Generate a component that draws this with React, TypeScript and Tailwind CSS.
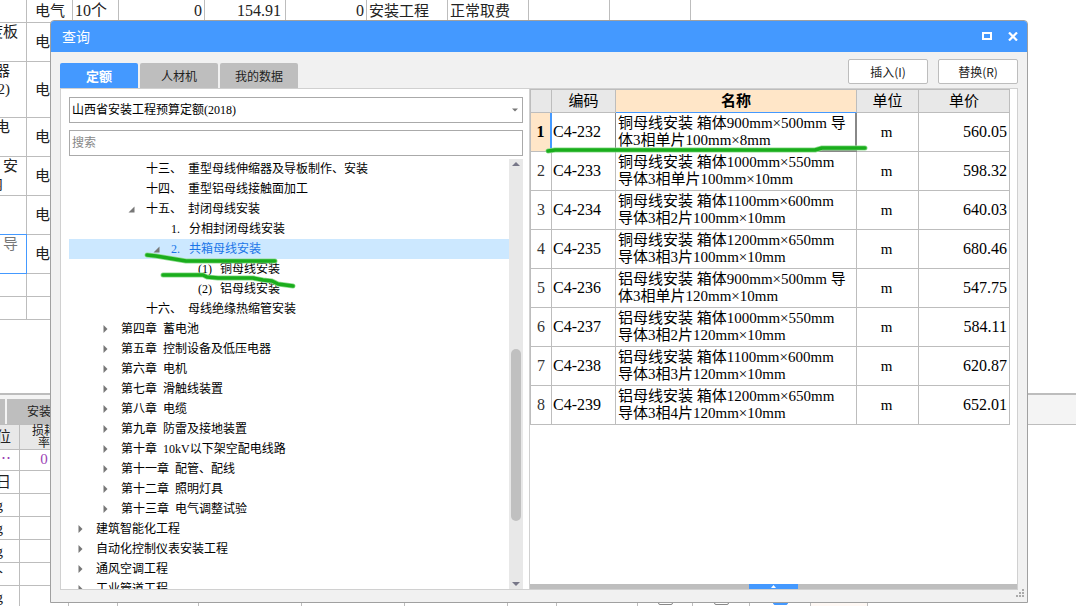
import React, { useState } from "react";

const fontCell = "font-['Liberation_Serif','Noto_Sans_CJK_SC',serif]";
const fontTree = "font-['Liberation_Serif','Noto_Sans_CJK_SC',sans-serif]";
const fontUi = "font-['Noto_Sans_CJK_SC',sans-serif]";

type TreeItem = {
  level: number;
  parts: string[];
  state?: "open" | "closed";
};

const tree: TreeItem[] = [
  { level: 2, parts: ["十三、", "重型母线伸缩器及导板制作、安装"] },
  { level: 2, parts: ["十四、", "重型铝母线接触面加工"] },
  { level: 2, parts: ["十五、", "封闭母线安装"], state: "open" },
  { level: 3, parts: ["1.", "分相封闭母线安装"] },
  { level: 3, parts: ["2.", "共箱母线安装"], state: "open" },
  { level: 4, parts: ["(1)", "铜母线安装"] },
  { level: 4, parts: ["(2)", "铝母线安装"] },
  { level: 2, parts: ["十六、", "母线绝缘热缩管安装"] },
  { level: 1, parts: ["第四章", "蓄电池"], state: "closed" },
  { level: 1, parts: ["第五章", "控制设备及低压电器"], state: "closed" },
  { level: 1, parts: ["第六章", "电机"], state: "closed" },
  { level: 1, parts: ["第七章", "滑触线装置"], state: "closed" },
  { level: 1, parts: ["第八章", "电缆"], state: "closed" },
  { level: 1, parts: ["第九章", "防雷及接地装置"], state: "closed" },
  { level: 1, parts: ["第十章", "10kV以下架空配电线路"], state: "closed" },
  { level: 1, parts: ["第十一章", "配管、配线"], state: "closed" },
  { level: 1, parts: ["第十二章", "照明灯具"], state: "closed" },
  { level: 1, parts: ["第十三章", "电气调整试验"], state: "closed" },
  { level: 0, parts: ["建筑智能化工程"], state: "closed" },
  { level: 0, parts: ["自动化控制仪表安装工程"], state: "closed" },
  { level: 0, parts: ["通风空调工程"], state: "closed" },
  { level: 0, parts: ["工业管道工程"], state: "closed" },
];

const indents = ["pl-[9px]", "pl-[34px]", "pl-[59px]", "pl-[84px]", "pl-[109px]"];

const quotas = [
  { code: "C4-232", name: ["铜母线安装 箱体900mm×500mm 导", "体3相单片100mm×8mm"], price: "560.05" },
  { code: "C4-233", name: ["铜母线安装 箱体1000mm×550mm", "导体3相单片100mm×10mm"], price: "598.32" },
  { code: "C4-234", name: ["铜母线安装 箱体1100mm×600mm", "导体3相2片100mm×10mm"], price: "640.03" },
  { code: "C4-235", name: ["铜母线安装 箱体1200mm×650mm", "导体3相3片100mm×10mm"], price: "680.46" },
  { code: "C4-236", name: ["铝母线安装 箱体900mm×500mm 导", "体3相单片120mm×10mm"], price: "547.75" },
  { code: "C4-237", name: ["铝母线安装 箱体1000mm×550mm", "导体3相2片120mm×10mm"], price: "584.11" },
  { code: "C4-238", name: ["铝母线安装 箱体1100mm×600mm", "导体3相3片120mm×10mm"], price: "620.87" },
  { code: "C4-239", name: ["铝母线安装 箱体1200mm×650mm", "导体3相4片120mm×10mm"], price: "652.01" },
];

export default function App() {
  return (
    <div className={`relative h-screen w-full overflow-hidden bg-white text-[15px] leading-[18px] text-[#222] ${fontCell}`}>
      <div className="flex h-full flex-col">
        <BudgetSheet />
        <DetailSheet />
      </div>
      <QueryDialog />
      <MarkerStrokes />
    </div>
  );
}

// Sheet behind the dialog

function BudgetSheet() {
  const rows = [
    { h: "h-[39px]", lines: ["度板"], pad: "pr-2", type: "电" },
    { h: "h-14", lines: ["器", "2)"], pad: "pr-4", type: "电" },
    { h: "h-[39px]", lines: ["电"], pad: "pr-4", type: "电" },
    { h: "h-[39px]", lines: ["安", "内\u3000"], pad: "pr-2", type: "电" },
    { h: "h-[39px]", lines: [], pad: "pr-2", type: "电" },
    { h: "h-[39px]", lines: ["导"], pad: "pr-2", type: "电", active: true },
    { h: "h-[23px]", lines: [], pad: "pr-2", type: "" },
    { h: "h-[23px]", lines: [], pad: "pr-2", type: "" },
  ];
  const cell = "border-r border-b border-[#bdbdbd]";
  return (
    <div className="h-[393px] shrink-0">
      <div className="grid h-[23px] w-[691px] grid-cols-[27px_46px_46px_86px_81px_81px_81px_81px_81px_81px] whitespace-nowrap leading-[22px]">
        <div className={cell} />
        <div className={`${cell} pl-2`}>电气</div>
        <div className={`${cell} pl-0.5 text-base leading-[22px]`}>10个</div>
        <div className={`${cell} pr-0.5 text-right text-base leading-[22px]`}>0</div>
        <div className={`${cell} pr-1 text-right text-base leading-[22px]`}>154.91</div>
        <div className={`${cell} pr-0.5 text-right text-base leading-[22px]`}>0</div>
        <div className={`${cell} pl-0.5`}>安装工程</div>
        <div className={`${cell} pl-0.5`}>正常取费</div>
        <div className={cell} />
        <div className={cell} />
      </div>
      {rows.map((row, i) => (
        <div key={i} className={`grid grid-cols-[27px_46px] ${row.h}`}>
          <div
            className={`flex flex-col items-end overflow-hidden whitespace-pre border-r border-b ${row.pad} ${
              row.active ? "border-[#4499ff] text-[#777] shadow-[0_-1px_0_#4499ff]" : "border-[#bdbdbd]"
            }`}
          >
            {row.lines.map((line) => (
              <span key={line}>{line}</span>
            ))}
          </div>
          <div className={`flex items-center pl-2 ${cell}`}>{row.type}</div>
        </div>
      ))}
    </div>
  );
}

function DetailSheet() {
  const units = ["⋯", "日", "kg", "kg", "kg", "个", "kg"];
  const grid =
    "grid h-[23px] w-[868px] shrink-0 grid-cols-[20px_49px_49px_81px_103px_103px_103px_49px_81px_55px_57px_61px_57px]";
  return (
    <div className="flex flex-1 flex-col overflow-hidden border-t-2 border-[#bdbdbd]">
      <div className="flex h-[30px] shrink-0 items-end gap-0.5 border-b border-[#bdbdbd] bg-[#f4f4f4] text-xs">
        <button className="h-[25px] w-[5px] bg-[#bebebe]" aria-label="工料机显示" />
        <button className="h-[25px] w-20 bg-[#bebebe] pl-5 text-left">安装费用</button>
      </div>
      <div className={grid}>
        <div className="flex items-center justify-end border-r border-b border-[#bdbdbd] bg-[#e8e8e8] pr-2">位</div>
        <div className="flex flex-col items-center justify-center border-r border-b border-[#bdbdbd] bg-[#e8e8e8] text-xs leading-3">
          <span>损耗</span>
          <span>率</span>
        </div>
      </div>
      {units.map((unit, r) => (
        <div key={r} className={grid}>
          {Array.from({ length: 13 }, (_, c) => (
            <div
              key={c}
              className={`flex items-center overflow-hidden border-r border-b border-[#bdbdbd] ${
                r === 0 ? "text-[#9b3fb5]" : ""
              } ${c === 0 ? (r < 2 ? "justify-end pr-2" : "justify-end pr-4") : "justify-center"} ${
                c === 12 ? "bg-[#fff9f5]" : ""
              }`}
            >
              {c === 0 && unit}
              {c === 1 && r === 0 && "0"}
              {c >= 9 && c <= 11 && (
                <input
                  type="checkbox"
                  aria-label={`选项${r + 1}-${c}`}
                  defaultChecked={c === 11}
                  className="size-[15px] appearance-none rounded-xs border border-[#888] bg-white checked:border-[#4499ff] checked:bg-[#4499ff]"
                />
              )}
            </div>
          ))}
        </div>
      ))}
    </div>
  );
}

// Dialog

function QueryDialog() {
  return (
    <div
      role="dialog"
      aria-label="查询"
      className="absolute top-5 right-12 bottom-[3px] left-[50px] flex flex-col overflow-hidden rounded-t border border-[#a0a0a0] bg-[#f1f1f1]"
    >
      <header className={`flex h-[31px] shrink-0 items-center justify-between bg-[#4499ff] pr-[9px] pb-px pl-[11px] text-white ${fontUi}`}>
        <h1 className="text-sm">查询</h1>
        <div className="flex items-center gap-4">
          <button aria-label="最大化">
            <svg width="10" height="8" viewBox="0 0 10 8">
              <rect x="1" y="1" width="8" height="6" fill="none" stroke="#fff" strokeWidth="2" />
            </svg>
          </button>
          <button aria-label="关闭">
            <svg width="10" height="9" viewBox="0 0 10 9">
              <path d="M1 0.5L9 8.5M9 0.5L1 8.5" stroke="#fff" strokeWidth="2.2" />
            </svg>
          </button>
        </div>
      </header>

      <div className={`flex h-9 shrink-0 justify-between px-[9px] text-xs ${fontUi}`}>
        <div role="tablist" className="flex items-end gap-0.5">
          <button role="tab" aria-selected="true" className="h-[25px] w-[78px] rounded-t-xs bg-[#4499ff] text-[13px] font-bold text-white">
            定额
          </button>
          <button role="tab" className="h-[25px] w-[78px] rounded-t-xs bg-[#bebebe]">人材机</button>
          <button role="tab" className="h-[25px] w-[78px] rounded-t-xs bg-[#bebebe]">我的数据</button>
        </div>
        <div className="flex gap-2.5 pt-[7px]">
          <button className="h-[25px] w-20 rounded-xs border border-[#bdbdbd] bg-white">插入(I)</button>
          <button className="h-[25px] w-20 rounded-xs border border-[#bdbdbd] bg-white">替换(R)</button>
        </div>
      </div>

      <div className="mx-[9px] mb-3 flex min-h-0 flex-1 border border-[#d0d0d0] bg-white">
        <CatalogPane />
        <QuotaPane />
      </div>

      {/* Resize grip */}
      <svg className="absolute right-0.5 bottom-1 text-[#aaa]" width="9" height="9" viewBox="0 0 9 9" fill="currentColor">
        <path d="M6 0h2v2h-2zM3 3h2v2h-2zM6 3h2v2h-2zM0 6h2v2h-2zM3 6h2v2h-2zM6 6h2v2h-2z" />
      </svg>
    </div>
  );
}

function CatalogPane() {
  const [selected, setSelected] = useState(4);
  return (
    <div className={`flex w-[469px] shrink-0 flex-col border-r border-[#d0d0d0] pt-2 pr-1.5 pl-2 text-xs text-black ${fontTree}`}>
      <div className="relative shrink-0">
        <select
          aria-label="定额库"
          className="block h-[26px] w-full appearance-none border border-[#aaa] bg-white px-0.5"
        >
          <option>山西省安装工程预算定额(2018)</option>
        </select>
        <svg className="pointer-events-none absolute top-[11px] right-[5px]" width="6" height="4" viewBox="0 0 6 4">
          <path d="M0 0.5h6L3 3.5z" fill="#777" />
        </svg>
      </div>
      <input
        type="text"
        aria-label="搜索"
        placeholder="搜索"
        className="mt-[7px] h-[26px] w-full shrink-0 border border-[#aaa] px-0.5 placeholder:text-[#888]"
      />
      <div className="mt-[3px] flex min-h-0 flex-1">
        <ul role="tree" className="flex-1 overflow-hidden">
          {tree.map((item, i) => (
            <li
              key={i}
              role="treeitem"
              aria-selected={i === selected}
              onClick={() => setSelected(i)}
              className={`flex h-5 items-center leading-5 whitespace-nowrap ${indents[item.level]} ${
                i === selected ? "bg-[#cce8ff] text-[#1a75e8]" : ""
              }`}
            >
              <span className="w-[18px] shrink-0">
                {item.state === "open" && (
                  <svg width="7" height="7" viewBox="0 0 7 7">
                    <path d="M6.5 0.5v6h-6z" fill="#777" />
                  </svg>
                )}
                {item.state === "closed" && (
                  <svg width="5" height="8" viewBox="0 0 5 8">
                    <path d="M0.5 0L4.5 4L0.5 8z" fill="#777" />
                  </svg>
                )}
              </span>
              <span className="flex gap-1.5">
                {item.parts.map((part) => (
                  <span key={part} className={item.level === 4 ? "min-w-[18px] text-center" : "min-w-3"}>
                    {part}
                  </span>
                ))}
              </span>
            </li>
          ))}
        </ul>
        <div className="flex w-3.5 flex-col items-center justify-between bg-[#e8e8e8] py-[3px]">
          <svg width="8" height="4" viewBox="0 0 8 4">
            <path d="M4 0l4 4H0z" fill="#778" />
          </svg>
          <div className="flex w-2.5 flex-1 flex-col">
            <div className="grow-[183]" />
            <div className="grow-[172] rounded-full bg-[#c0c0c0]" />
            <div className="grow-[61]" />
          </div>
          <svg width="8" height="4" viewBox="0 0 8 4">
            <path d="M0 0h8L4 4z" fill="#778" />
          </svg>
        </div>
      </div>
    </div>
  );
}

function QuotaPane() {
  const cell = "border-r border-b border-[#bdbdbd]";
  return (
    <div className="flex min-w-0 flex-1 flex-col justify-between text-black">
      <div className="pr-[7px]">
        <table className="w-full table-fixed border-separate border-spacing-0 border-t border-l border-[#bdbdbd]">
          <colgroup>
            <col className="w-[21px]" />
            <col className="w-16" />
            <col />
            <col className="w-[62px]" />
            <col className="w-[91px]" />
          </colgroup>
          <thead>
            <tr className="h-[23px] bg-[#e8e8e8] leading-[22px]">
              <th className={cell} aria-label="序号" />
              <th className={`${cell} p-0 font-normal`}>编码</th>
              <th className="border-r border-b border-r-[#bdbdbd] border-b-[#4499ff] bg-[#ffe6c8] p-0 font-bold">名称</th>
              <th className={`${cell} p-0 font-normal`}>单位</th>
              <th className={`${cell} p-0 font-normal`}>单价</th>
            </tr>
          </thead>
          <tbody>
            {quotas.map((q, i) => {
              const active = i === 0;
              return (
                <tr key={q.code} className="h-[39px]">
                  <th
                    scope="row"
                    className={`border-b border-b-[#bdbdbd] p-0 text-base ${
                      active ? "border-r-2 border-r-[#4499ff] bg-[#ffe6c8] font-bold" : "border-r border-r-[#bdbdbd] font-normal text-[#333]"
                    }`}
                  >
                    {i + 1}
                  </th>
                  <td className={`${cell} p-0 pl-px text-base`}>{q.code}</td>
                  <td
                    className={`border-r border-b p-0 pl-0.5 leading-[17px] whitespace-nowrap ${
                      active ? "border-[#888] shadow-[-1px_0_0_#888,inset_-1px_-1px_0_#888]" : "border-[#bdbdbd]"
                    }`}
                  >
                    {q.name[0]}
                    <br />
                    {q.name[1]}
                  </td>
                  <td className={`${cell} p-0 pr-0.5 text-center`}>m</td>
                  <td className={`${cell} p-0 pr-0.5 text-right text-base`}>{q.price}</td>
                </tr>
              );
            })}
          </tbody>
        </table>
      </div>
      <div className="flex h-[5px] justify-center bg-[#bebebe]">
        <button aria-label="展开" className="flex w-[49px] items-center justify-center bg-[#4499ff]">
          <svg width="5" height="3" viewBox="0 0 5 3">
            <path d="M2.5 0L5 3H0z" fill="#fff" />
          </svg>
        </button>
      </div>
    </div>
  );
}

// Freehand green underlines drawn on top of the window
function MarkerStrokes() {
  const strokes = [
    "M548 151L555 150L815 150L822 148L865 148",
    "M147 255L156 256L168 258L186 261L275 261",
    "M163 275L203 275L207 277L218 278L253 278L263 280L272 281L278 284L293 286",
  ];
  return (
    <svg className="pointer-events-none absolute inset-0 size-full" fill="none" strokeLinecap="round" strokeLinejoin="round">
      {strokes.map((d) => (
        <g key={d}>
          <path d={d} stroke="#8fdc90" strokeWidth="5" />
          <path d={d} stroke="#1aad1c" strokeWidth="3.5" />
        </g>
      ))}
    </svg>
  );
}
